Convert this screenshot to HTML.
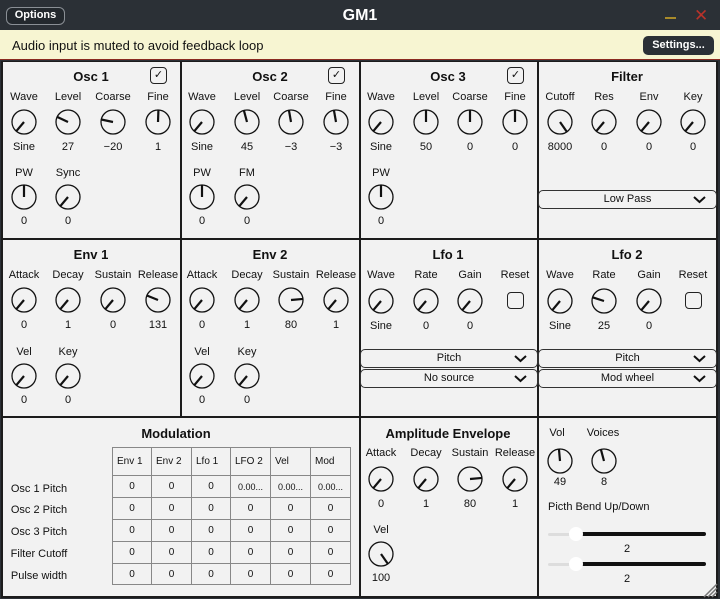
<!DOCTYPE html>
<html><head><meta charset="utf-8"><style>
*{margin:0;padding:0;box-sizing:border-box}
body{width:720px;height:599px;background:#2b3036;position:relative;overflow:hidden;font-family:"Liberation Sans",sans-serif;color:#111}
.p{position:absolute;background:#f2f2f2}
.t{position:absolute;transform:translateX(-50%);white-space:nowrap;font-size:11px;line-height:12px}
.h{position:absolute;transform:translateX(-50%);white-space:nowrap;font-size:13px;font-weight:bold;line-height:14px}
svg.k{position:absolute;width:26px;height:26px}
svg.k circle{fill:none;stroke:#111;stroke-width:1.3}
svg.k line{stroke:#111;stroke-width:2.2}
.cb{position:absolute;width:17px;height:17px;border:1.3px solid #222;border-radius:4px;font-size:11px;text-align:center;line-height:15px}
.dd{position:absolute;border:1px solid #333;border-radius:5px;font-size:11px;text-align:center;background:#f2f2f2}
.dd svg{position:absolute;right:10px;top:5px}
table{position:absolute;border-collapse:collapse;font-size:10px;table-layout:fixed}
td{border:1px solid #888;text-align:center;padding:0;overflow:hidden;white-space:nowrap}
</style></head><body>
<div style="position:absolute;left:6px;top:7px;width:59px;height:18px;border:1.5px solid #8a8f95;border-radius:6px;color:#fff;font-size:11px;font-weight:bold;text-align:center;line-height:15px;background:#23282d">Options</div>
<div style="position:absolute;left:0;width:720px;top:7px;text-align:center;color:#fff;font-weight:bold;font-size:16px">GM1</div>
<div style="position:absolute;left:665px;top:17px;width:11px;height:2px;background:#a88a2a"></div>
<div style="position:absolute;left:694px;top:6px;color:#b8322a;font-size:17px">✕</div>
<div style="position:absolute;left:0;top:30px;width:720px;height:30px;background:#f7f5d2;border-bottom:1.5px solid #8b2a20"></div>
<div style="position:absolute;left:12px;top:38px;font-size:13px">Audio input is muted to avoid feedback loop</div>
<div style="position:absolute;left:643px;top:36px;width:71px;height:19px;background:#2b3036;border-radius:5px;color:#fff;font-size:11px;font-weight:bold;text-align:center;line-height:19px">Settings...</div>
<div style="position:absolute;left:1px;top:61px;width:717px;height:537px;background:#1c1c1c"></div>
<div class="p" style="left:3px;top:62px;width:177px;height:176px"></div>
<div class="p" style="left:182px;top:62px;width:177px;height:176px"></div>
<div class="p" style="left:361px;top:62px;width:176px;height:176px"></div>
<div class="p" style="left:539px;top:62px;width:177px;height:176px"></div>
<div class="p" style="left:3px;top:240px;width:177px;height:176px"></div>
<div class="p" style="left:182px;top:240px;width:177px;height:176px"></div>
<div class="p" style="left:361px;top:240px;width:176px;height:176px"></div>
<div class="p" style="left:539px;top:240px;width:177px;height:176px"></div>
<div class="p" style="left:3px;top:418px;width:356px;height:178px"></div>
<div class="p" style="left:361px;top:418px;width:176px;height:178px"></div>
<div class="p" style="left:539px;top:418px;width:177px;height:178px"></div>

<div class="h" style="left:91px;top:70px">Osc 1</div>
<div class="cb" style="left:150px;top:67px">✓</div>
<div class="t" style="left:24px;top:91px">Wave</div><div class="t" style="left:68px;top:91px">Level</div><div class="t" style="left:113px;top:91px">Coarse</div><div class="t" style="left:158px;top:91px">Fine</div>
<svg class="k" style="left:11px;top:109px"><circle cx="13" cy="13" r="12"/><line x1="13" y1="13" x2="13" y2="1" transform="rotate(-140 13 13)"/></svg>
<svg class="k" style="left:55px;top:109px"><circle cx="13" cy="13" r="12"/><line x1="13" y1="13" x2="13" y2="1" transform="rotate(-65 13 13)"/></svg>
<svg class="k" style="left:100px;top:109px"><circle cx="13" cy="13" r="12"/><line x1="13" y1="13" x2="13" y2="1" transform="rotate(-78 13 13)"/></svg>
<svg class="k" style="left:145px;top:109px"><circle cx="13" cy="13" r="12"/><line x1="13" y1="13" x2="13" y2="1" transform="rotate(2 13 13)"/></svg>
<div class="t" style="left:24px;top:141px">Sine</div><div class="t" style="left:68px;top:141px">27</div><div class="t" style="left:113px;top:141px">−20</div><div class="t" style="left:158px;top:141px">1</div>
<div class="t" style="left:24px;top:167px">PW</div><div class="t" style="left:68px;top:167px">Sync</div>
<svg class="k" style="left:11px;top:184px"><circle cx="13" cy="13" r="12"/><line x1="13" y1="13" x2="13" y2="1"/></svg>
<svg class="k" style="left:55px;top:184px"><circle cx="13" cy="13" r="12"/><line x1="13" y1="13" x2="13" y2="1" transform="rotate(-140 13 13)"/></svg>
<div class="t" style="left:24px;top:215px">0</div><div class="t" style="left:68px;top:215px">0</div>

<div class="h" style="left:270px;top:70px">Osc 2</div>
<div class="cb" style="left:328px;top:67px">✓</div>
<div class="t" style="left:202px;top:91px">Wave</div><div class="t" style="left:247px;top:91px">Level</div><div class="t" style="left:291px;top:91px">Coarse</div><div class="t" style="left:336px;top:91px">Fine</div>
<svg class="k" style="left:189px;top:109px"><circle cx="13" cy="13" r="12"/><line x1="13" y1="13" x2="13" y2="1" transform="rotate(-140 13 13)"/></svg>
<svg class="k" style="left:234px;top:109px"><circle cx="13" cy="13" r="12"/><line x1="13" y1="13" x2="13" y2="1" transform="rotate(-15 13 13)"/></svg>
<svg class="k" style="left:278px;top:109px"><circle cx="13" cy="13" r="12"/><line x1="13" y1="13" x2="13" y2="1" transform="rotate(-10 13 13)"/></svg>
<svg class="k" style="left:323px;top:109px"><circle cx="13" cy="13" r="12"/><line x1="13" y1="13" x2="13" y2="1" transform="rotate(-10 13 13)"/></svg>
<div class="t" style="left:202px;top:141px">Sine</div><div class="t" style="left:247px;top:141px">45</div><div class="t" style="left:291px;top:141px">−3</div><div class="t" style="left:336px;top:141px">−3</div>
<div class="t" style="left:202px;top:167px">PW</div><div class="t" style="left:247px;top:167px">FM</div>
<svg class="k" style="left:189px;top:184px"><circle cx="13" cy="13" r="12"/><line x1="13" y1="13" x2="13" y2="1"/></svg>
<svg class="k" style="left:234px;top:184px"><circle cx="13" cy="13" r="12"/><line x1="13" y1="13" x2="13" y2="1" transform="rotate(-140 13 13)"/></svg>
<div class="t" style="left:202px;top:215px">0</div><div class="t" style="left:247px;top:215px">0</div>

<div class="h" style="left:448px;top:70px">Osc 3</div>
<div class="cb" style="left:507px;top:67px">✓</div>
<div class="t" style="left:381px;top:91px">Wave</div><div class="t" style="left:426px;top:91px">Level</div><div class="t" style="left:470px;top:91px">Coarse</div><div class="t" style="left:515px;top:91px">Fine</div>
<svg class="k" style="left:368px;top:109px"><circle cx="13" cy="13" r="12"/><line x1="13" y1="13" x2="13" y2="1" transform="rotate(-140 13 13)"/></svg>
<svg class="k" style="left:413px;top:109px"><circle cx="13" cy="13" r="12"/><line x1="13" y1="13" x2="13" y2="1"/></svg>
<svg class="k" style="left:457px;top:109px"><circle cx="13" cy="13" r="12"/><line x1="13" y1="13" x2="13" y2="1"/></svg>
<svg class="k" style="left:502px;top:109px"><circle cx="13" cy="13" r="12"/><line x1="13" y1="13" x2="13" y2="1"/></svg>
<div class="t" style="left:381px;top:141px">Sine</div><div class="t" style="left:426px;top:141px">50</div><div class="t" style="left:470px;top:141px">0</div><div class="t" style="left:515px;top:141px">0</div>
<div class="t" style="left:381px;top:167px">PW</div>
<svg class="k" style="left:368px;top:184px"><circle cx="13" cy="13" r="12"/><line x1="13" y1="13" x2="13" y2="1"/></svg>
<div class="t" style="left:381px;top:215px">0</div>

<div class="h" style="left:627px;top:70px">Filter</div>
<div class="t" style="left:560px;top:91px">Cutoff</div><div class="t" style="left:604px;top:91px">Res</div><div class="t" style="left:649px;top:91px">Env</div><div class="t" style="left:693px;top:91px">Key</div>
<svg class="k" style="left:547px;top:109px"><circle cx="13" cy="13" r="12"/><line x1="13" y1="13" x2="13" y2="1" transform="rotate(145 13 13)"/></svg>
<svg class="k" style="left:591px;top:109px"><circle cx="13" cy="13" r="12"/><line x1="13" y1="13" x2="13" y2="1" transform="rotate(-140 13 13)"/></svg>
<svg class="k" style="left:636px;top:109px"><circle cx="13" cy="13" r="12"/><line x1="13" y1="13" x2="13" y2="1" transform="rotate(-140 13 13)"/></svg>
<svg class="k" style="left:680px;top:109px"><circle cx="13" cy="13" r="12"/><line x1="13" y1="13" x2="13" y2="1" transform="rotate(-140 13 13)"/></svg>
<div class="t" style="left:560px;top:141px">8000</div><div class="t" style="left:604px;top:141px">0</div><div class="t" style="left:649px;top:141px">0</div><div class="t" style="left:693px;top:141px">0</div>
<div class="dd" style="left:538px;top:190px;width:179px;height:19px;line-height:17px">Low Pass<svg width="13" height="8"><path d="M1 1 L6.5 6 L12 1" fill="none" stroke="#111" stroke-width="2"/></svg></div>

<div class="h" style="left:91px;top:248px">Env 1</div>
<div class="t" style="left:24px;top:269px">Attack</div><div class="t" style="left:68px;top:269px">Decay</div><div class="t" style="left:113px;top:269px">Sustain</div><div class="t" style="left:158px;top:269px">Release</div>
<svg class="k" style="left:11px;top:287px"><circle cx="13" cy="13" r="12"/><line x1="13" y1="13" x2="13" y2="1" transform="rotate(-140 13 13)"/></svg>
<svg class="k" style="left:55px;top:287px"><circle cx="13" cy="13" r="12"/><line x1="13" y1="13" x2="13" y2="1" transform="rotate(-140 13 13)"/></svg>
<svg class="k" style="left:100px;top:287px"><circle cx="13" cy="13" r="12"/><line x1="13" y1="13" x2="13" y2="1" transform="rotate(-140 13 13)"/></svg>
<svg class="k" style="left:145px;top:287px"><circle cx="13" cy="13" r="12"/><line x1="13" y1="13" x2="13" y2="1" transform="rotate(-68 13 13)"/></svg>
<div class="t" style="left:24px;top:319px">0</div><div class="t" style="left:68px;top:319px">1</div><div class="t" style="left:113px;top:319px">0</div><div class="t" style="left:158px;top:319px">131</div>
<div class="t" style="left:24px;top:346px">Vel</div><div class="t" style="left:68px;top:346px">Key</div>
<svg class="k" style="left:11px;top:363px"><circle cx="13" cy="13" r="12"/><line x1="13" y1="13" x2="13" y2="1" transform="rotate(-140 13 13)"/></svg>
<svg class="k" style="left:55px;top:363px"><circle cx="13" cy="13" r="12"/><line x1="13" y1="13" x2="13" y2="1" transform="rotate(-140 13 13)"/></svg>
<div class="t" style="left:24px;top:394px">0</div><div class="t" style="left:68px;top:394px">0</div>

<div class="h" style="left:270px;top:248px">Env 2</div>
<div class="t" style="left:202px;top:269px">Attack</div><div class="t" style="left:247px;top:269px">Decay</div><div class="t" style="left:291px;top:269px">Sustain</div><div class="t" style="left:336px;top:269px">Release</div>
<svg class="k" style="left:189px;top:287px"><circle cx="13" cy="13" r="12"/><line x1="13" y1="13" x2="13" y2="1" transform="rotate(-140 13 13)"/></svg>
<svg class="k" style="left:234px;top:287px"><circle cx="13" cy="13" r="12"/><line x1="13" y1="13" x2="13" y2="1" transform="rotate(-140 13 13)"/></svg>
<svg class="k" style="left:278px;top:287px"><circle cx="13" cy="13" r="12"/><line x1="13" y1="13" x2="13" y2="1" transform="rotate(85 13 13)"/></svg>
<svg class="k" style="left:323px;top:287px"><circle cx="13" cy="13" r="12"/><line x1="13" y1="13" x2="13" y2="1" transform="rotate(-140 13 13)"/></svg>
<div class="t" style="left:202px;top:319px">0</div><div class="t" style="left:247px;top:319px">1</div><div class="t" style="left:291px;top:319px">80</div><div class="t" style="left:336px;top:319px">1</div>
<div class="t" style="left:202px;top:346px">Vel</div><div class="t" style="left:247px;top:346px">Key</div>
<svg class="k" style="left:189px;top:363px"><circle cx="13" cy="13" r="12"/><line x1="13" y1="13" x2="13" y2="1" transform="rotate(-140 13 13)"/></svg>
<svg class="k" style="left:234px;top:363px"><circle cx="13" cy="13" r="12"/><line x1="13" y1="13" x2="13" y2="1" transform="rotate(-140 13 13)"/></svg>
<div class="t" style="left:202px;top:394px">0</div><div class="t" style="left:247px;top:394px">0</div>

<div class="h" style="left:448px;top:248px">Lfo 1</div>
<div class="t" style="left:381px;top:269px">Wave</div><div class="t" style="left:426px;top:269px">Rate</div><div class="t" style="left:470px;top:269px">Gain</div><div class="t" style="left:515px;top:269px">Reset</div>
<svg class="k" style="left:368px;top:288px"><circle cx="13" cy="13" r="12"/><line x1="13" y1="13" x2="13" y2="1" transform="rotate(-140 13 13)"/></svg>
<svg class="k" style="left:413px;top:288px"><circle cx="13" cy="13" r="12"/><line x1="13" y1="13" x2="13" y2="1" transform="rotate(-140 13 13)"/></svg>
<svg class="k" style="left:457px;top:288px"><circle cx="13" cy="13" r="12"/><line x1="13" y1="13" x2="13" y2="1" transform="rotate(-140 13 13)"/></svg>
<div class="cb" style="left:507px;top:292px"></div>
<div class="t" style="left:381px;top:320px">Sine</div><div class="t" style="left:426px;top:320px">0</div><div class="t" style="left:470px;top:320px">0</div>
<div class="dd" style="left:360px;top:349px;width:178px;height:19px;line-height:17px">Pitch<svg width="13" height="8"><path d="M1 1 L6.5 6 L12 1" fill="none" stroke="#111" stroke-width="2"/></svg></div>
<div class="dd" style="left:360px;top:369px;width:178px;height:19px;line-height:17px">No source<svg width="13" height="8"><path d="M1 1 L6.5 6 L12 1" fill="none" stroke="#111" stroke-width="2"/></svg></div>

<div class="h" style="left:627px;top:248px">Lfo 2</div>
<div class="t" style="left:560px;top:269px">Wave</div><div class="t" style="left:604px;top:269px">Rate</div><div class="t" style="left:649px;top:269px">Gain</div><div class="t" style="left:693px;top:269px">Reset</div>
<svg class="k" style="left:547px;top:288px"><circle cx="13" cy="13" r="12"/><line x1="13" y1="13" x2="13" y2="1" transform="rotate(-140 13 13)"/></svg>
<svg class="k" style="left:591px;top:288px"><circle cx="13" cy="13" r="12"/><line x1="13" y1="13" x2="13" y2="1" transform="rotate(-72 13 13)"/></svg>
<svg class="k" style="left:636px;top:288px"><circle cx="13" cy="13" r="12"/><line x1="13" y1="13" x2="13" y2="1" transform="rotate(-140 13 13)"/></svg>
<div class="cb" style="left:685px;top:292px"></div>
<div class="t" style="left:560px;top:320px">Sine</div><div class="t" style="left:604px;top:320px">25</div><div class="t" style="left:649px;top:320px">0</div>
<div class="dd" style="left:538px;top:349px;width:179px;height:19px;line-height:17px">Pitch<svg width="13" height="8"><path d="M1 1 L6.5 6 L12 1" fill="none" stroke="#111" stroke-width="2"/></svg></div>
<div class="dd" style="left:538px;top:369px;width:179px;height:19px;line-height:17px">Mod wheel<svg width="13" height="8"><path d="M1 1 L6.5 6 L12 1" fill="none" stroke="#111" stroke-width="2"/></svg></div>

<div class="h" style="left:176px;top:427px">Modulation</div>
<table style="left:112px;top:447px;width:238px">
<colgroup><col style="width:39px"><col style="width:40px"><col style="width:39px"><col style="width:40px"><col style="width:40px"><col style="width:40px"></colgroup>
<tr style="height:28px"><td style="text-align:left;padding-left:4px">Env 1</td><td style="text-align:left;padding-left:4px">Env 2</td><td style="text-align:left;padding-left:4px">Lfo 1</td><td style="text-align:left;padding-left:4px">LFO 2</td><td style="text-align:left;padding-left:4px">Vel</td><td style="text-align:left;padding-left:4px">Mod</td></tr>
<tr style="height:22px"><td>0</td><td>0</td><td>0</td><td style="font-size:9px">0.00...</td><td style="font-size:9px">0.00...</td><td style="font-size:9px">0.00...</td></tr>
<tr style="height:22px"><td>0</td><td>0</td><td>0</td><td>0</td><td>0</td><td>0</td></tr>
<tr style="height:22px"><td>0</td><td>0</td><td>0</td><td>0</td><td>0</td><td>0</td></tr>
<tr style="height:22px"><td>0</td><td>0</td><td>0</td><td>0</td><td>0</td><td>0</td></tr>
<tr style="height:21px"><td>0</td><td>0</td><td>0</td><td>0</td><td>0</td><td>0</td></tr>
</table>
<div class="t" style="left:39px;top:483px">Osc 1 Pitch</div>
<div class="t" style="left:39px;top:504px">Osc 2 Pitch</div>
<div class="t" style="left:39px;top:526px">Osc 3 Pitch</div>
<div class="t" style="left:39px;top:548px">Filter Cutoff</div>
<div class="t" style="left:39px;top:570px">Pulse width</div>

<div class="h" style="left:448px;top:427px">Amplitude Envelope</div>
<div class="t" style="left:381px;top:447px">Attack</div><div class="t" style="left:426px;top:447px">Decay</div><div class="t" style="left:470px;top:447px">Sustain</div><div class="t" style="left:515px;top:447px">Release</div>
<svg class="k" style="left:368px;top:466px"><circle cx="13" cy="13" r="12"/><line x1="13" y1="13" x2="13" y2="1" transform="rotate(-140 13 13)"/></svg>
<svg class="k" style="left:413px;top:466px"><circle cx="13" cy="13" r="12"/><line x1="13" y1="13" x2="13" y2="1" transform="rotate(-140 13 13)"/></svg>
<svg class="k" style="left:457px;top:466px"><circle cx="13" cy="13" r="12"/><line x1="13" y1="13" x2="13" y2="1" transform="rotate(85 13 13)"/></svg>
<svg class="k" style="left:502px;top:466px"><circle cx="13" cy="13" r="12"/><line x1="13" y1="13" x2="13" y2="1" transform="rotate(-140 13 13)"/></svg>
<div class="t" style="left:381px;top:498px">0</div><div class="t" style="left:426px;top:498px">1</div><div class="t" style="left:470px;top:498px">80</div><div class="t" style="left:515px;top:498px">1</div>
<div class="t" style="left:381px;top:524px">Vel</div>
<svg class="k" style="left:368px;top:541px"><circle cx="13" cy="13" r="12"/><line x1="13" y1="13" x2="13" y2="1" transform="rotate(145 13 13)"/></svg>
<div class="t" style="left:381px;top:572px">100</div>

<div class="t" style="left:557px;top:427px">Vol</div><div class="t" style="left:603px;top:427px">Voices</div>
<svg class="k" style="left:547px;top:448px"><circle cx="13" cy="13" r="12"/><line x1="13" y1="13" x2="13" y2="1" transform="rotate(-5 13 13)"/></svg>
<svg class="k" style="left:591px;top:448px"><circle cx="13" cy="13" r="12"/><line x1="13" y1="13" x2="13" y2="1" transform="rotate(-15 13 13)"/></svg>
<div class="t" style="left:560px;top:476px">49</div><div class="t" style="left:604px;top:476px">8</div>
<div style="position:absolute;left:548px;top:501px;font-size:11px">Picth Bend Up/Down</div>
<div style="position:absolute;left:548px;top:533px;width:30px;height:3px;background:#ddd;border-radius:2px"></div>
<div style="position:absolute;left:578px;top:532px;width:128px;height:4px;background:#111;border-radius:2px"></div>
<div style="position:absolute;left:569px;top:527px;width:14px;height:14px;background:#fff;border-radius:50%"></div>
<div class="t" style="left:627px;top:543px">2</div>
<div style="position:absolute;left:548px;top:563px;width:30px;height:3px;background:#ddd;border-radius:2px"></div>
<div style="position:absolute;left:578px;top:562px;width:128px;height:4px;background:#111;border-radius:2px"></div>
<div style="position:absolute;left:569px;top:557px;width:14px;height:14px;background:#fff;border-radius:50%"></div>
<div class="t" style="left:627px;top:573px">2</div>
<svg style="position:absolute;left:702px;top:583px" width="16" height="15"><path d="M2 14 L15 1 M6 14 L15 5 M10 14 L15 9" stroke="#777" stroke-width="1.5"/></svg>
</body></html>
